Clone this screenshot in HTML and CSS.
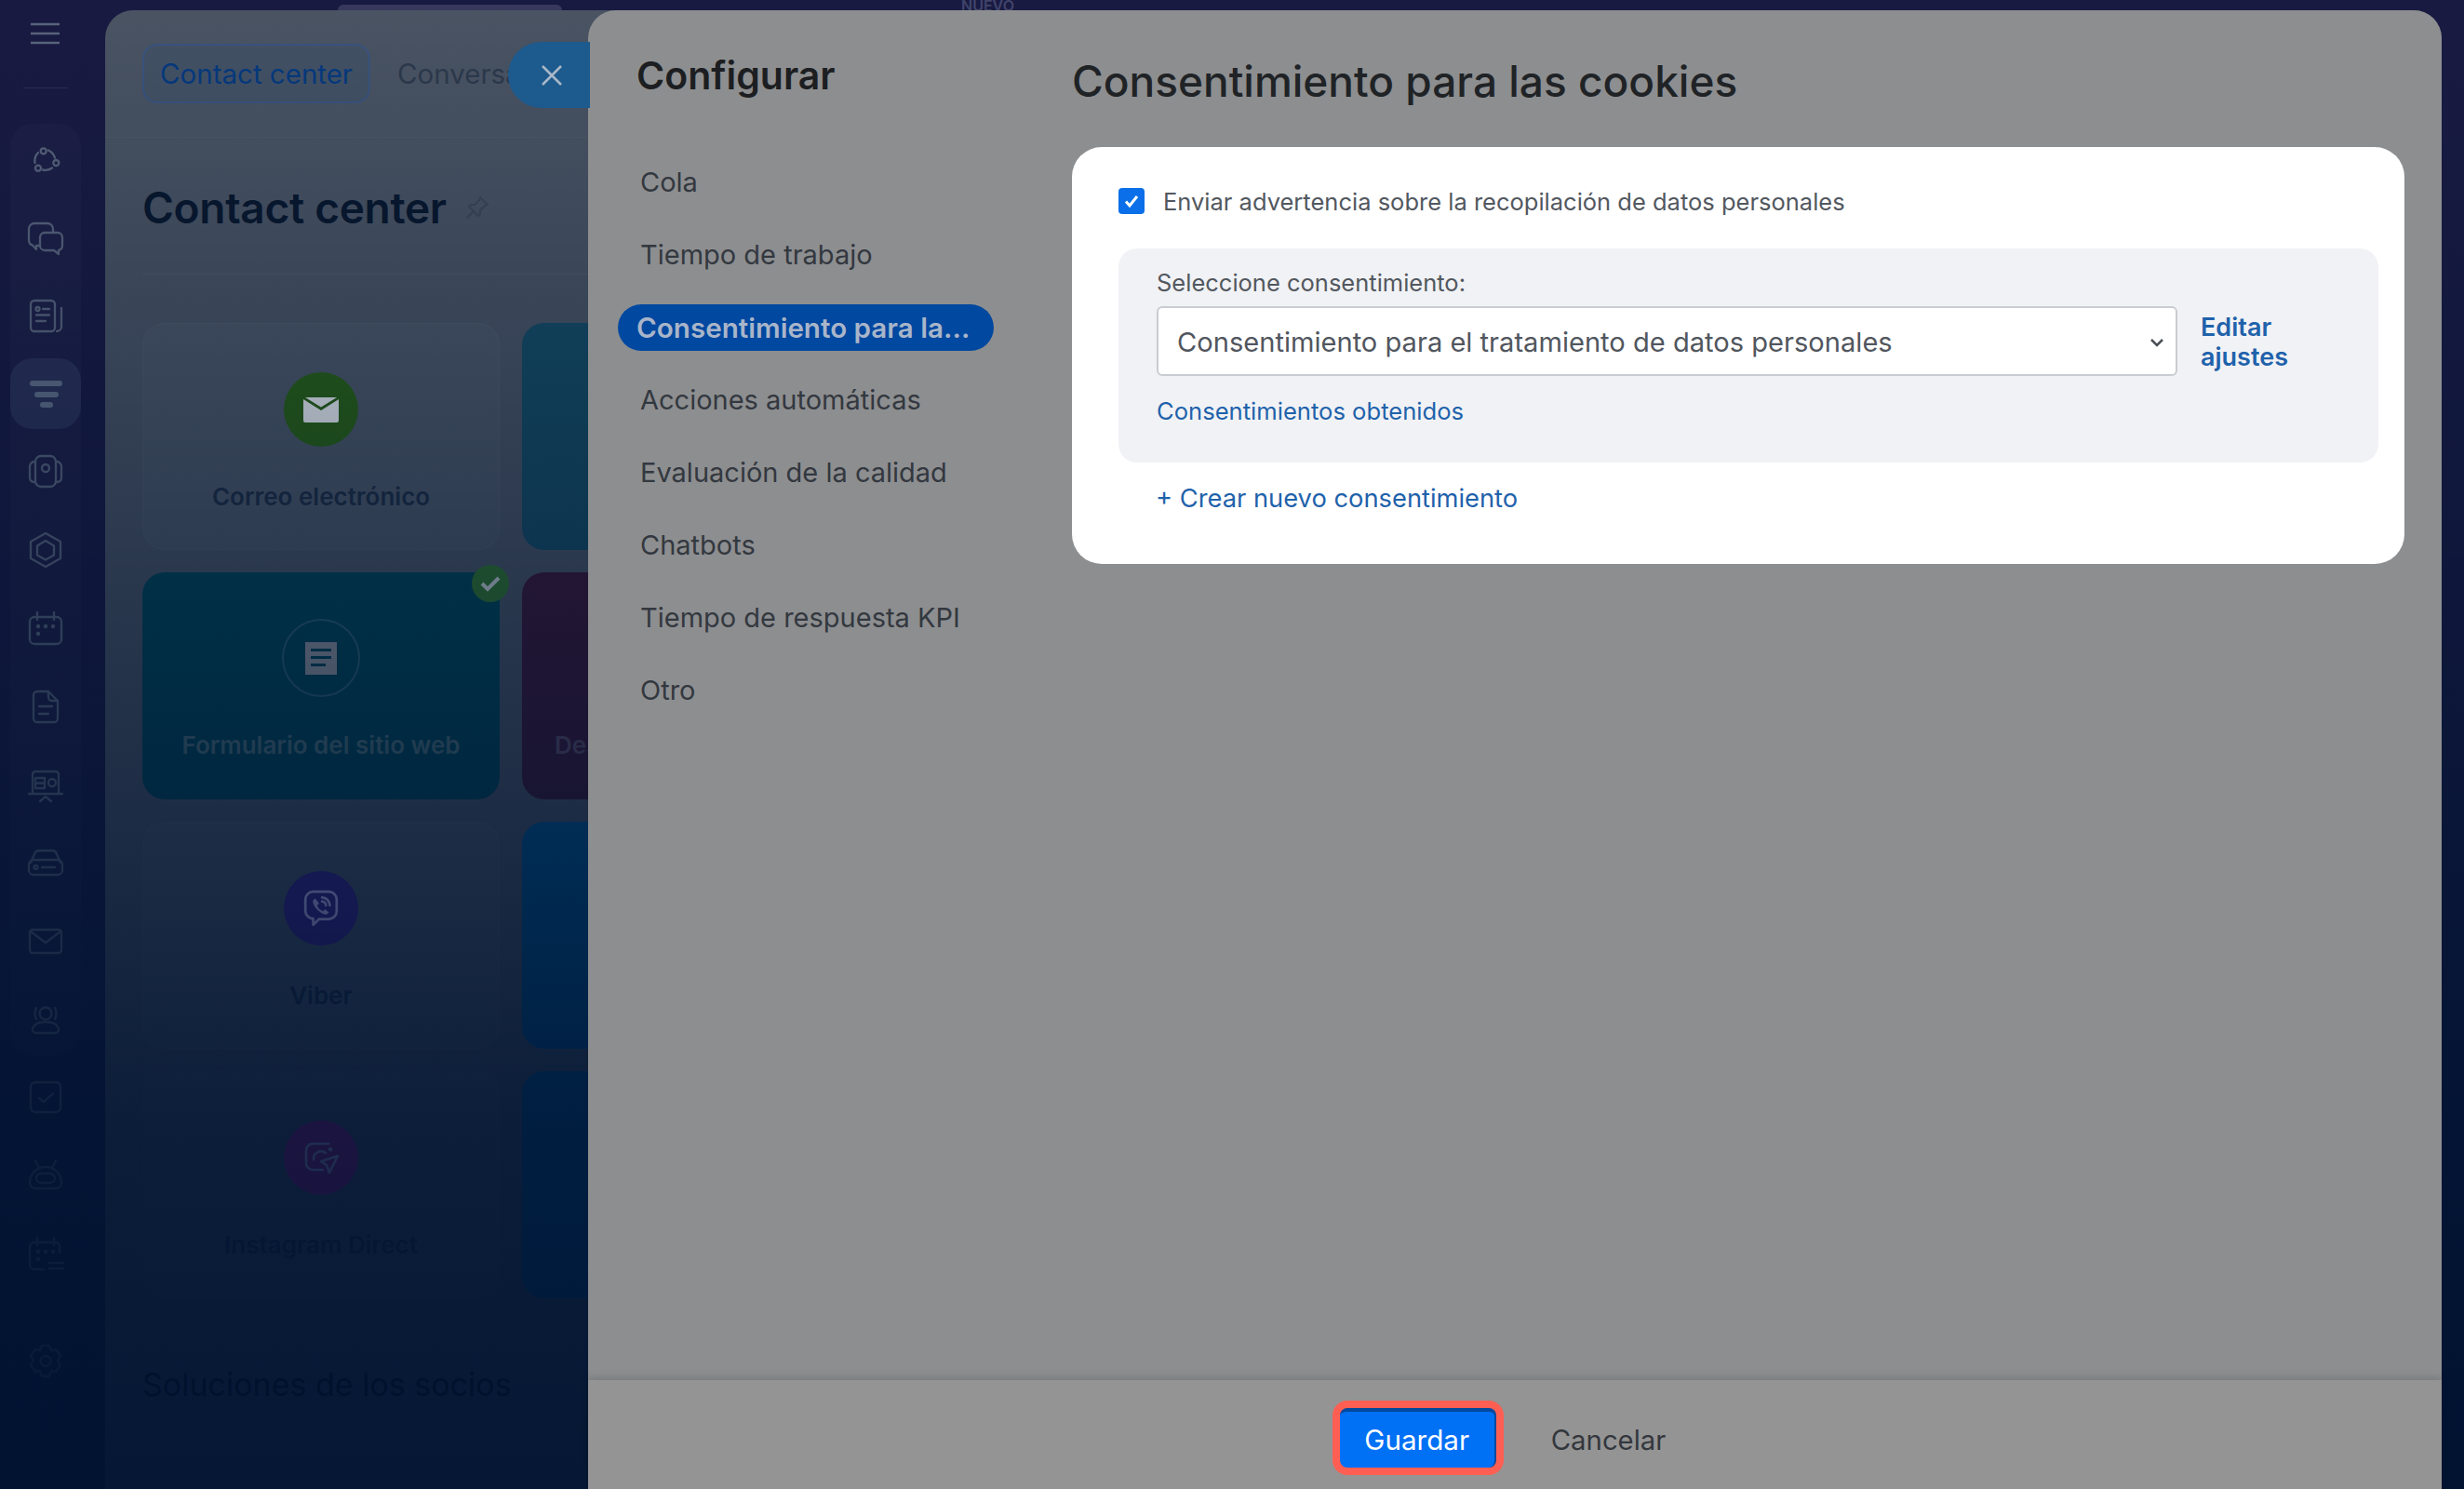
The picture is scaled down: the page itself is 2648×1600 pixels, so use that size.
FILE: index.html
```html
<!doctype html>
<html lang="es">
  <head>
    <meta charset="UTF-8" />
    <meta name="viewport" content="width=device-width, initial-scale=1.0" />
    <title>Consentimiento para las cookies</title>
    <link rel="stylesheet" href="styles.css">
  </head>
  <body>
    <div class="backdrop">
      <aside class="rail">
        <svg class="burger" width="40" height="30" viewBox="0 0 40 30"><path d="M4 4h31M4 14h31M4 24h31" /></svg>
        <div class="rail-line"></div>
        <div class="rail-group">
          <div class="rail-item">
            <svg class="ico" viewBox="0 0 40 40"><circle cx="17.7" cy="11.3" r="3" /><circle cx="31.3" cy="24" r="3" /><circle cx="12" cy="29.7" r="3" /><path d="M8.5 24a13 13 0 0 1 3.500-11M23 10.500a13 13 0 0 1 7 8M17 31.500a13 13 0 0 0 10-2" /></svg>
          </div>
          <div class="rail-item">
            <svg class="ico" viewBox="0 0 40 40"><path d="M19 15h14a5 5 0 0 1 5 5v9a5 5 0 0 1-4 4.8V38l-5-4H19a5 5 0 0 1-5-5v-9a5 5 0 0 1 5-5z" /><path d="M28 15v-4a6 6 0 0 0-6-6H8a6 6 0 0 0-6 6v12a6 6 0 0 0 4 5.6L10 33v-4h4" /></svg>
          </div>
          <div class="rail-item">
            <svg class="ico" viewBox="0 0 40 40"><rect x="4" y="4" width="26" height="33" rx="4" /><path d="M37 12v20a5 5 0 0 1-5 5M17 13h7M10 19.500h14M10 26h10" /><circle cx="11.500" cy="13" r="2" /></svg>
          </div>
          <div class="rail-item active">
            <svg class="ico bars" viewBox="0 0 40 40"><path d="M6 9h29M11 21h20M17 32h8" /></svg>
          </div>
          <div class="rail-item">
            <svg class="ico" viewBox="0 0 40 40"><rect x="9" y="3" width="22" height="33" rx="6" /><circle cx="20" cy="16" r="4" /><path d="M8 9C5 9 3 12 3 14v12c0 3 2 5 5 5M32 9c3 0 5 3 5 5v12c0 3-2 5-5 5" /></svg>
          </div>
          <div class="rail-item">
            <svg class="ico" viewBox="0 0 40 40"><path d="M20 2l16 9v18l-16 9-16-9V11z" /><path d="M20 10l9 5.500v10l-9 5-9-5v-10z" /></svg>
          </div>
          <div class="rail-item">
            <svg class="ico" viewBox="0 0 40 40"><rect x="3" y="8" width="34" height="29" rx="5" /><path d="M11 3v8M29 3v8" /><g class="dots"><circle cx="12" cy="18" r="2.200" /><circle cx="20" cy="18" r="2.200" /><circle cx="28" cy="18" r="2.200" /><circle cx="12" cy="26" r="2.200" /></g></svg>
          </div>
          <div class="rail-item">
            <svg class="ico" viewBox="0 0 40 40"><path d="M11 4h12l10 10v19a4 4 0 0 1-4 4H11a4 4 0 0 1-4-4V8a4 4 0 0 1 4-4z" /><path d="M23 4v6a4 4 0 0 0 4 4h6M13 20h14M13 28h10" /></svg>
          </div>
          <div class="rail-item">
            <svg class="ico" viewBox="0 0 40 40"><path d="M6 30V9a3 3 0 0 1 3-3h22a3 3 0 0 1 3 3v21M2 30h36M14 38l6-5 6 5" /><rect x="9" y="13" width="10" height="11" /><path d="M9 18.500h10" /><circle cx="27" cy="18" r="4" /></svg>
          </div>
          <div class="rail-item">
            <svg class="ico" viewBox="0 0 40 40"><rect x="2" y="17" width="36" height="16" rx="5" /><path d="M4 20l4-9a5 5 0 0 1 5-4h14a5 5 0 0 1 5 4l4 9M16 25h14" /><circle cx="9.500" cy="25" r="2" /></svg>
          </div>
          <div class="rail-item">
            <svg class="ico" viewBox="0 0 40 40"><rect x="3" y="8" width="34" height="25" rx="3" /><path d="M4 10l16 12 16-12" /></svg>
          </div>
          <div class="rail-item">
            <svg class="ico" viewBox="0 0 40 40"><circle cx="20" cy="14" r="6.500" /><path d="M9 35h22a4 4 0 0 0 3-5c-2-5-8-7-14-7s-12 2-14 7a4 4 0 0 0 3 5zM10 8c-2 3-2 9 0 12M30 8c2 3 2 9 0 12" /></svg>
          </div>
        </div>
        <div class="rail-item">
          <svg class="ico" viewBox="0 0 40 40"><rect x="4" y="4" width="32" height="32" rx="5" /><path d="M13 21l5 4 10-9" /></svg>
        </div>
        <div class="rail-item">
          <svg class="ico" viewBox="0 0 40 40"><path d="M9 4l4 8M31 4l-4 8M3 28c0-10 8-17 17-17s17 7 17 17a6 6 0 0 1-6 6H9a6 6 0 0 1-6-6z" /><rect x="10" y="18" width="20" height="10" rx="5" /></svg>
        </div>
        <div class="rail-item">
          <svg class="ico" viewBox="0 0 40 40"><path d="M35 19v-7a4 4 0 0 0-4-4H8a5 5 0 0 0-5 5v19a5 5 0 0 0 5 5h10M11 3v8M29 3v8M24 30h15M24 36h15" /><g class="dots"><circle cx="12" cy="18" r="2.200" /><circle cx="20" cy="18" r="2.200" /><circle cx="28" cy="18" r="2.200" /><circle cx="12" cy="26" r="2.200" /></g></svg>
        </div>
        <div class="rail-item gear">
          <svg class="ico" viewBox="0 0 40 40"><path d="M16 3h8l2 5 5-1 5 7-3 5 3 5-5 7-5-1-2 6h-8l-2-6-5 1-5-7 3-5-3-5 5-7 5 1z" /><circle cx="20" cy="19.500" r="5.500" /></svg>
        </div>
      </aside>

      <div class="main">
        <div class="topband">
          <div class="search-edge"></div>
          <span class="new-tag">NUEVO</span>
        </div>
        <section class="panel">
          <div class="tabs">
            <span class="tab current">Contact center</span>
            <span class="tab">Conversaciones</span>
          </div>
          <div class="title-row">
            <h2 class="page-title">Contact center</h2>
            <svg class="pin" width="28" height="28" viewBox="0 0 28 28"><path d="M17 3l8 8-3 1-5 5 0 4-2 2-10-10 2-2 4 0 5-5zM9 19l-6 6" /></svg>
          </div>
          <div class="cards">
            <div class="card plain">
              <div class="disc green">
                <svg width="38" height="27" viewBox="0 0 38 27"><path class="env" d="M0 2l19 12L38 2V25a2 2 0 0 1-2 2H2a2 2 0 0 1-2-2z" /><path class="env" d="M2 0h34l-17 10.500z" /></svg>
              </div>
              <span class="card-name">Correo electrónico</span>
            </div>
            <div class="card teal"></div>
            <div class="card deep">
              <span class="tick"><svg width="24" height="20" viewBox="0 0 24 20"><path d="M3 10l6 6L21 4" /></svg></span>
              <div class="disc ring">
                <svg width="34" height="35" viewBox="0 0 34 35"><path class="sheet" d="M0 0h34v35H0zM6 7v3h22V7zM6 15v3h22v-3zM6 23v3h16v-3z" /></svg>
              </div>
              <span class="card-name light">Formulario del sitio web</span>
            </div>
            <div class="card plum">
              <div class="disc empty"></div>
              <span class="card-name plum-name">Descuentos del sitio web</span>
            </div>
            <div class="card plain">
              <div class="disc violet">
                <svg class="glyph" width="42" height="42" viewBox="0 0 40 40"><path d="M12 3h16a8 8 0 0 1 8 8v12a8 8 0 0 1-8 8H18l-6 6v-6.500A8 8 0 0 1 4 23V11a8 8 0 0 1 8-8z" /><path class="fill" d="M14 10c-2 1-3 3-2 5 2 5 6 9 11 11 2 1 4 0 5-2l-4-3-2 2c-3-1-5-3-6-6l2-2z" /><path d="M21 9a8 8 0 0 1 8 8M21 13a4 4 0 0 1 4 4" /></svg>
              </div>
              <span class="card-name">Viber</span>
            </div>
            <div class="card blue"></div>
            <div class="card plain">
              <div class="disc magenta">
                <svg class="glyph" width="40" height="40" viewBox="0 0 40 40"><path d="M28 5H11a7 7 0 0 0-7 7v14a7 7 0 0 0 7 7h11M38 18l-18 6 6 4 3 8zM12 22a8 8 0 0 1 13-7" /><circle cx="30" cy="11" r="1" /></svg>
              </div>
              <span class="card-name">Instagram Direct</span>
            </div>
            <div class="card blue"></div>
          </div>
          <h3 class="partners">Soluciones de los socios</h3>
        </section>
      </div>
      <div class="fade"></div>
    </div>

    <div class="slider">
      <button class="close-tab">
        <svg width="24" height="24" viewBox="0 0 24 24"><path d="M2 2l20 20M22 2L2 22" /></svg>
      </button>
      <div class="slider-body">
        <nav class="menu">
          <div class="menu-title">Configurar</div>
          <a class="menu-item">Cola</a>
          <a class="menu-item">Tiempo de trabajo</a>
          <a class="menu-item selected">Consentimiento para la...</a>
          <a class="menu-item">Acciones automáticas</a>
          <a class="menu-item">Evaluación de la calidad</a>
          <a class="menu-item">Chatbots</a>
          <a class="menu-item">Tiempo de respuesta KPI</a>
          <a class="menu-item">Otro</a>
        </nav>
        <div class="content">
          <h1 class="content-title">Consentimiento para las cookies</h1>
          <div class="sheet-card">
            <label class="check-row">
              <span class="checkbox"><svg width="20" height="20" viewBox="0 0 20 20"><path d="M4 10.500l4 4.500 8-10" /></svg></span>
              Enviar advertencia sobre la recopilación de datos personales
            </label>
            <div class="agreement">
              <div class="agreement-label">Seleccione consentimiento:</div>
              <div class="agreement-row">
                <div class="select">
                  <span>Consentimiento para el tratamiento de datos personales</span>
                  <svg width="16" height="10" viewBox="0 0 16 10"><path d="M2 2l6 6 6-6" /></svg>
                </div>
                <a class="edit-link">Editar ajustes</a>
              </div>
              <a class="link">Consentimientos obtenidos</a>
            </div>
            <a class="link create">+ Crear nuevo consentimiento</a>
          </div>
        </div>
      </div>
      <footer class="actions">
        <button class="save">Guardar</button>
        <a class="cancel">Cancelar</a>
      </footer>
    </div>
  </body>
</html>
```

FILE: styles.css
```css
* {
  box-sizing: border-box;
}

html,
body {
  height: 100%;
}

body {
  font-family: Inter, "Liberation Sans", sans-serif;
  margin: 0;
  padding: 0;
  overflow: hidden;
  background: #191a42;
}

/* everything behind the slider */
.backdrop {
  position: relative;
  display: flex;
  height: 1600px;
}

/* the dim layer that swallows the page towards the bottom */
.fade {
  position: absolute;
  inset: 0;
  background: linear-gradient(
    to bottom,
    rgba(0, 19, 49, 0) 0,
    rgba(0, 19, 49, 0.63) 900px,
    rgba(0, 19, 49, 0.84) 1200px,
    rgba(0, 19, 49, 0.94) 1600px
  );
}

.rail {
  width: 113px;
  flex: none;
  padding: 22px 26px 0 11px;
  color: #5a657c;
}

.burger {
  display: block;
  margin-left: 18px;
}

.burger path {
  fill: none;
  stroke: currentColor;
  stroke-width: 2.5;
}

.rail-line {
  width: 48px;
  height: 1px;
  margin: 42px 0 38px 14px;
  background: rgba(255, 255, 255, 0.09);
}

.rail-group {
  display: flex;
  flex-direction: column;
  gap: 8px;
  margin-bottom: 8px;
  background: rgba(255, 255, 255, 0.025);
  border-radius: 24px;
}

.rail-item {
  height: 76px;
  display: flex;
  align-items: center;
  justify-content: center;
  border-radius: 24px;
}

.rail > .rail-item {
  margin-bottom: 8px;
}

.rail > .rail-item.gear {
  margin-top: 40px;
}

.rail-item.active {
  background: rgba(120, 150, 180, 0.17);
}

.ico {
  width: 40px;
  height: 40px;
  fill: none;
  stroke: currentColor;
  stroke-width: 2.3;
  stroke-linecap: round;
  stroke-linejoin: round;
}

.ico .dots {
  fill: currentColor;
  stroke: none;
}

.ico.bars {
  stroke-width: 6;
  color: #65728a;
}

.main {
  width: 2511px;
  flex: none;
  display: flex;
  flex-direction: column;
}

.topband {
  height: 11px;
  flex: none;
  display: flex;
  align-items: flex-end;
  overflow: hidden;
}

.search-edge {
  width: 241px;
  height: 6px;
  margin-left: 250px;
  background: #38385c;
  border-radius: 12px 12px 0 0;
}

.new-tag {
  margin-left: 429px;
  font-size: 16px;
  font-weight: 600;
  line-height: 12px;
  height: 11px;
  color: #41446a;
}

.panel {
  flex: 1;
  padding: 0 40px;
  background: #4a5463;
  border-radius: 30px 30px 0 0;
}

.tabs {
  display: flex;
  align-items: flex-start;
  gap: 29px;
  height: 137px;
  padding-top: 36px;
  margin: 0 -40px;
  padding-left: 40px;
  border-bottom: 1px solid rgba(255, 255, 255, 0.03);
}

.tab {
  height: 64px;
  line-height: 64px;
  font-size: 29.5px;
  color: #2e3a4c;
  white-space: nowrap;
}

.tab.current {
  width: 245px;
  display: flex;
  align-items: center;
  justify-content: center;
  color: #043a80;
  background: #445265;
  border: 2px solid #3a5580;
  border-radius: 16px;
}

.title-row {
  display: flex;
  align-items: center;
  gap: 19px;
  height: 147px;
  padding-top: 3px;
  margin-bottom: 52px;
  border-bottom: 1px solid rgba(255, 255, 255, 0.05);
}

.page-title {
  margin: 0;
  font-size: 46px;
  font-weight: 600;
  letter-spacing: -0.3px;
  color: #08172c;
}

.pin {
  fill: none;
  stroke: #3c4859;
  stroke-width: 2;
  stroke-linejoin: round;
  stroke-linecap: round;
}

.cards {
  display: grid;
  grid-template-columns: repeat(2, 384px);
  grid-auto-rows: 244px;
  gap: 24px;
}

.card {
  position: relative;
  display: flex;
  flex-direction: column;
  align-items: center;
  padding-top: 52px;
  border-radius: 24px;
}

.card.plain {
  background: #4d5867;
  border: 1px solid rgba(255, 255, 255, 0.035);
}

.card.teal {
  background: #164c64;
}

.card.deep {
  background: #004656;
}

.card.plum {
  background: #3c1836;
}

.card.blue {
  background: #00568f;
}

.disc {
  width: 80px;
  height: 80px;
  flex: none;
  display: flex;
  align-items: center;
  justify-content: center;
  border-radius: 50%;
}

.disc.green {
  background: #2a6213;
}

.disc.ring {
  width: 84px;
  height: 84px;
  margin-top: -2px;
  border: 2px solid #2b6070;
}

.disc.violet {
  background: #3e258f;
}

.disc.magenta {
  background: #ad1b93;
}

.env {
  fill: #eef1f5;
}

.sheet {
  fill: #91959d;
  fill-rule: evenodd;
}

.glyph {
  fill: none;
  stroke: #c8bdfb;
  stroke-width: 2.6;
  stroke-linecap: round;
  stroke-linejoin: round;
}

.glyph .fill {
  fill: #c8bdfb;
  stroke: none;
}

.card-name {
  margin-top: 38px;
  font-size: 26px;
  font-weight: 600;
  color: #1e2e44;
}

.card-name.light {
  margin-top: 36px;
  color: #4a6e76;
}

.card-name.plum-name {
  color: #5e4a66;
}

.tick {
  position: absolute;
  top: -8px;
  right: -10px;
  width: 40px;
  height: 40px;
  display: flex;
  align-items: center;
  justify-content: center;
  background: #33762d;
  border-radius: 50%;
}

.tick path {
  fill: none;
  stroke: #c4cfd0;
  stroke-width: 4;
}

.partners {
  margin: 72px 0 0 0;
  font-size: 34px;
  font-weight: 400;
  color: #000;
}

/* the slider itself */
.slider {
  position: absolute;
  top: 11px;
  left: 632px;
  right: 24px;
  bottom: 0;
  display: flex;
  flex-direction: column;
  background: #8d8e90;
  border-radius: 30px 30px 0 0;
}

.close-tab {
  position: absolute;
  top: 34px;
  left: -86px;
  width: 88px;
  height: 71px;
  padding: 0 0 0 6px;
  display: flex;
  align-items: center;
  justify-content: center;
  background: #1d5a8e;
  border: none;
  border-radius: 36px 0 0 36px;
}

.close-tab path {
  fill: none;
  stroke: #a9b8c8;
  stroke-width: 2.5;
}

.slider-body {
  flex: 1;
  display: flex;
  min-height: 0;
}

.menu {
  width: 520px;
  flex: none;
  display: flex;
  flex-direction: column;
  gap: 28px;
  padding: 44px 0 0 32px;
}

.menu-title {
  margin: 0 0 36px 20px;
  height: 52px;
  line-height: 52px;
  font-size: 41px;
  font-weight: 600;
  color: #1c1e21;
}

.menu-item {
  width: 404px;
  height: 50px;
  line-height: 50px;
  padding-left: 24px;
  font-size: 29px;
  color: #33383f;
  white-space: nowrap;
}

.menu-item.selected {
  padding-left: 20px;
  font-size: 29.6px;
  font-weight: 600;
  color: #a9b5c9;
  background: #0048a0;
  border-radius: 25px;
}

.content {
  flex: 1;
  padding: 0 40px 0 0;
}

.content-title {
  margin: 45px 0 40px 0;
  height: 62px;
  line-height: 62px;
  font-size: 46px;
  font-weight: 500;
  color: #202326;
}

.sheet-card {
  height: 448px;
  padding: 44px 28px 0 50px;
  background: #fff;
  border-radius: 32px;
}

.check-row {
  display: flex;
  align-items: center;
  gap: 20px;
  height: 28px;
  margin-bottom: 37px;
  font-size: 25.5px;
  color: #52585f;
}

.checkbox {
  width: 28px;
  height: 28px;
  display: flex;
  align-items: center;
  justify-content: center;
  background: #0a6fe8;
  border-radius: 4px;
}

.checkbox path {
  fill: none;
  stroke: #fff;
  stroke-width: 3;
}

.agreement {
  height: 230px;
  padding: 22px 0 0 41px;
  background: #f1f2f5;
  border-radius: 20px;
}

.agreement-label {
  height: 30px;
  line-height: 30px;
  margin-bottom: 10px;
  font-size: 25.5px;
  color: #52585f;
}

.agreement-row {
  display: flex;
  align-items: center;
  gap: 25px;
  margin-bottom: 22px;
}

.select {
  width: 1097px;
  height: 75px;
  flex: none;
  display: flex;
  align-items: center;
  justify-content: space-between;
  padding: 2px 12px 0 20px;
  font-size: 29.1px;
  color: #51565e;
  background: #fff;
  border: 2px solid #c9ccd2;
  border-radius: 6px;
}

.select path {
  fill: none;
  stroke: #4a4f57;
  stroke-width: 2.5;
}

.edit-link {
  width: 120px;
  padding-top: 2px;
  font-size: 27px;
  font-weight: 600;
  line-height: 32px;
  color: #1f62ab;
}

.link {
  display: block;
  line-height: 32px;
  font-size: 25.6px;
  color: #1f62ab;
}

.link.create {
  margin: 23px 0 0 40px;
  font-size: 27.3px;
}

.actions {
  height: 117px;
  flex: none;
  display: flex;
  align-items: flex-start;
  justify-content: center;
  gap: 59px;
  padding: 30px 26px 0 0;
  background: #949494;
  box-shadow: 0 -3px 8px rgba(0, 0, 0, 0.14);
}

.save {
  width: 168px;
  height: 64px;
  padding: 0;
  font-family: inherit;
  font-size: 29.6px;
  color: #fff;
  background: #0070f5;
  border: none;
  border-top: 4px solid #00489c;
  border-right: 2px solid #00489c;
  border-radius: 8px;
  box-shadow: 0 0 0 8px #ff5f52;
}

.cancel {
  line-height: 70px;
  font-size: 29.3px;
  color: #33373d;
}
```
